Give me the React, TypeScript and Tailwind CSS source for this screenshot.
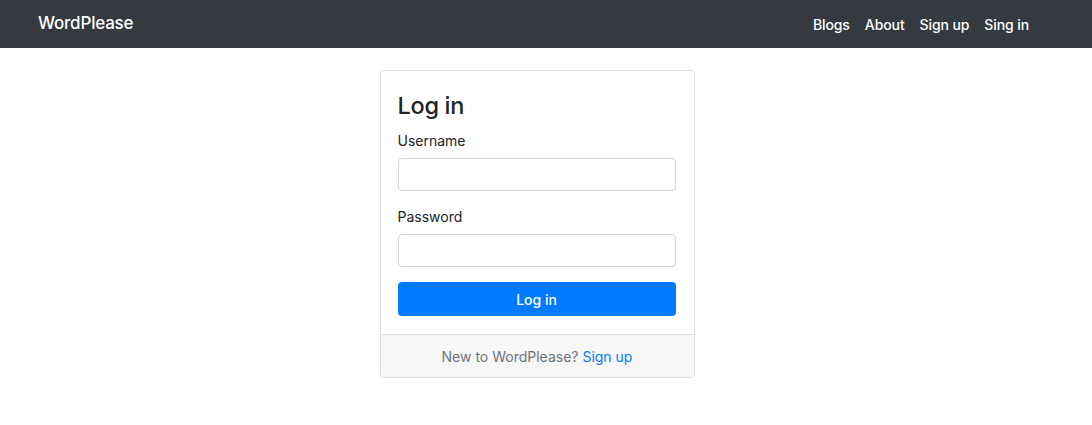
export default function App() {
  return (
    <div className="min-h-screen bg-white text-[#212529]" style={{ fontFamily: 'Inter, "Liberation Sans", sans-serif' }}>
      {/* Top navbar */}
      <nav className="flex h-12 items-center justify-between bg-[#343a40] pl-[38px] pr-[63px]">
        <a className="text-[17px] font-medium tracking-[-0.2px] text-white">WordPlease</a>
        <ul className="flex items-center gap-[15px] text-[14px] font-medium tracking-[-0.1px] text-white">
          <li>Blogs</li>
          <li>About</li>
          <li>Sign up</li>
          <li>Sing in</li>
        </ul>
      </nav>

      {/* Login card */}
      <div className="flex justify-center pr-[18px] pt-[22px]">
        <div className="w-[315px] overflow-hidden rounded-[4px] border border-[#dfdfdf]">
          <div className="pb-[18px] pl-[17px] pr-[18px] pt-[20px]">
            <h3 className="text-[23.5px] font-medium leading-[29px] tracking-[-0.3px] text-[#212529]">Log in</h3>
            <form className="mt-[10px]">
              <label className="block text-[14px] leading-[22px]">Username</label>
              <input className="mt-[6px] block h-[33px] w-full rounded-[4px] border border-[#ced4da] px-3 outline-none" />
              <label className="mt-[15px] block text-[14px] leading-[22px]">Password</label>
              <input type="password" className="mt-[6px] block h-[33px] w-full rounded-[4px] border border-[#ced4da] px-3 outline-none" />
              <button type="button" className="mt-[15px] block h-[34px] w-full rounded-[4px] bg-[#007bff] text-[14px] font-medium text-white">
                Log in
              </button>
            </form>
          </div>
          <div className="flex h-[43px] items-center justify-center border-t border-[#dfdfdf] bg-[#f7f7f7] text-[14px] text-[#6c757d]">
            New to WordPlease?&nbsp;<a className="text-[#007bff]">Sign up</a>
          </div>
        </div>
      </div>
    </div>
  );
}
